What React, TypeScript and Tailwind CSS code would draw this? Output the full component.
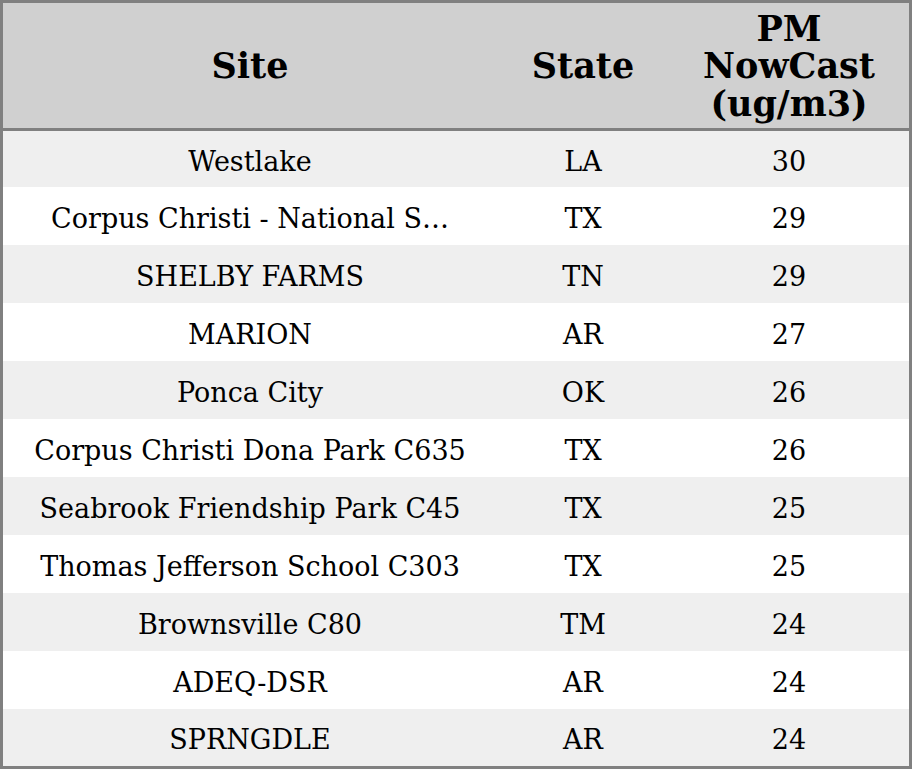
import React from "react";

const rows: [string, string, string][] = [
  ["Westlake", "LA", "30"],
  ["Corpus Christi - National S…", "TX", "29"],
  ["SHELBY FARMS", "TN", "29"],
  ["MARION", "AR", "27"],
  ["Ponca City", "OK", "26"],
  ["Corpus Christi Dona Park C635", "TX", "26"],
  ["Seabrook Friendship Park C45", "TX", "25"],
  ["Thomas Jefferson School C303", "TX", "25"],
  ["Brownsville C80", "TM", "24"],
  ["ADEQ-DSR", "AR", "24"],
  ["SPRNGDLE", "AR", "24"],
];

export default function App() {
  return (
    <div
      className="w-[912px] h-[769px] border-[3px] border-[#808080] bg-white text-black flex flex-col"
      style={{ fontFamily: '"DejaVu Serif", serif' }}
    >
      <div className="h-[124px] shrink-0 bg-[#d0d0d0] border-b-[3px] border-[#808080] box-content flex items-center pt-[1px] font-bold text-[35px] leading-[37.5px]">
        <div className="w-[494px] text-center">Site</div>
        <div className="w-[172px] text-center">State</div>
        <div className="w-[240px] text-center">
          PM
          <br />
          NowCast
          <br />
          (ug/m3)
        </div>
      </div>
      {rows.map((r, i) => (
        <div
          key={i}
          className={`flex items-center pt-[4px] text-[27px] leading-none ${i % 2 === 0 ? "bg-[#efefef]" : "bg-white"} ${i === 0 ? "h-[56px]" : i === rows.length - 1 ? "h-[57px]" : "h-[58px]"}`}
        >
          <div className="w-[494px] text-center whitespace-nowrap">{r[0]}</div>
          <div className="w-[172px] text-center">{r[1]}</div>
          <div className="w-[240px] text-center">{r[2]}</div>
        </div>
      ))}
    </div>
  );
}
